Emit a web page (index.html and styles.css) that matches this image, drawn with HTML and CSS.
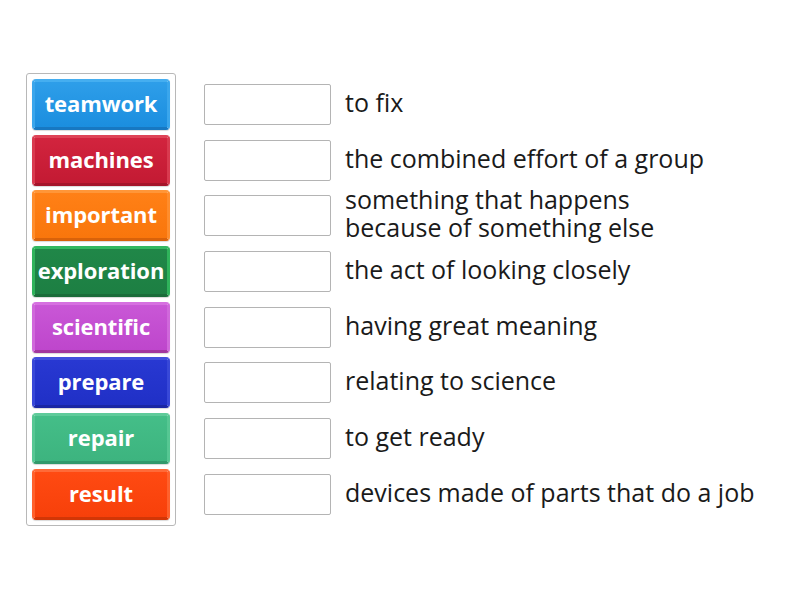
FILE: index.html
```html
<!DOCTYPE html>
<html lang="en">
<head>
<meta charset="utf-8">
<title>Match up</title>
<link rel="stylesheet" href="styles.css">
</head>
<body>
<main class="game">
  <div class="bank">
    <div class="tile blue">teamwork</div>
    <div class="tile red">machines</div>
    <div class="tile orange">important</div>
    <div class="tile green">exploration</div>
    <div class="tile purple">scientific</div>
    <div class="tile navy">prepare</div>
    <div class="tile mint">repair</div>
    <div class="tile vermilion">result</div>
  </div>
  <div class="targets">
    <div class="row"><div class="slot"></div><div class="def">to fix</div></div>
    <div class="row"><div class="slot"></div><div class="def">the combined effort of a group</div></div>
    <div class="row"><div class="slot"></div><div class="def">something that happens<br>because of something else</div></div>
    <div class="row"><div class="slot"></div><div class="def">the act of looking closely</div></div>
    <div class="row"><div class="slot"></div><div class="def">having great meaning</div></div>
    <div class="row"><div class="slot"></div><div class="def">relating to science</div></div>
    <div class="row"><div class="slot"></div><div class="def">to get ready</div></div>
    <div class="row"><div class="slot"></div><div class="def">devices made of parts that do a job</div></div>
  </div>
</main>
</body>
</html>
```
FILE: styles.css
```css
html, body {
  margin: 0;
  padding: 0;
  background: #ffffff;
}
body {
  font-family: "Open Sans", "Noto Sans", sans-serif;
  width: 800px;
  height: 600px;
  overflow: hidden;
}
.game {
  display: flex;
  align-items: flex-start;
  padding: 73px 0 0 26px;
}
.bank {
  width: 138px;
  padding: 5px 5px 5px 5px;
  border: 1px solid #b8b8b8;
  border-radius: 3px;
  display: flex;
  flex-direction: column;
  gap: 4.7px;
}
.tile {
  height: 51px;
  box-sizing: border-box;
  border-radius: 4px;
  border: 3px solid;
  padding-bottom: 3px;
  display: flex;
  align-items: center;
  justify-content: center;
  color: #ffffff;
  font-weight: 700;
  font-size: 22px;
  letter-spacing: -0.1px;
  white-space: nowrap;
  box-shadow: 0 1px 1px rgba(0,0,0,0.15);
}
.blue { background: linear-gradient(#2e9ee9, #1b8edf); border-color: #45aef0 #3aa6ec #1778c2; }
.red { background: linear-gradient(#d2243e, #c31a33); border-color: #de4357 #d93a4f #a5142a; }
.orange { background: linear-gradient(#ff8016, #f9760c); border-color: #ff9638 #ff8d2c #d9620a; }
.green { background: linear-gradient(#208748, #1d7f43); border-color: #33b860 #2fb35b #1a6c39; }
.purple { background: linear-gradient(#c957d6, #be46cc); border-color: #d670e0 #d068db #a2379f; }
.navy { background: linear-gradient(#2838d2, #2030c6); border-color: #4050dc #3848d8 #1a26a4; }
.mint { background: linear-gradient(#44be88, #3db47f); border-color: #5fcb9a #56c793 #32996b; }
.vermilion { background: linear-gradient(#ff4a12, #f7400a); border-color: #ff6a38 #ff612c #d23606; }
.targets {
  margin-left: 28px;
  padding-top: 6px;
  display: flex;
  flex-direction: column;
  gap: 4.7px;
}
.row {
  height: 51px;
  display: flex;
  align-items: center;
}
.slot {
  width: 127px;
  height: 41px;
  box-sizing: border-box;
  border: 1px solid #b4b4b4;
  border-radius: 2px;
  background: #ffffff;
  flex: none;
}
.def {
  margin-left: 14px;
  margin-bottom: 5px;
  font-size: 25px;
  line-height: 28px;
  color: #1a1a1a;
  white-space: nowrap;
}
```
